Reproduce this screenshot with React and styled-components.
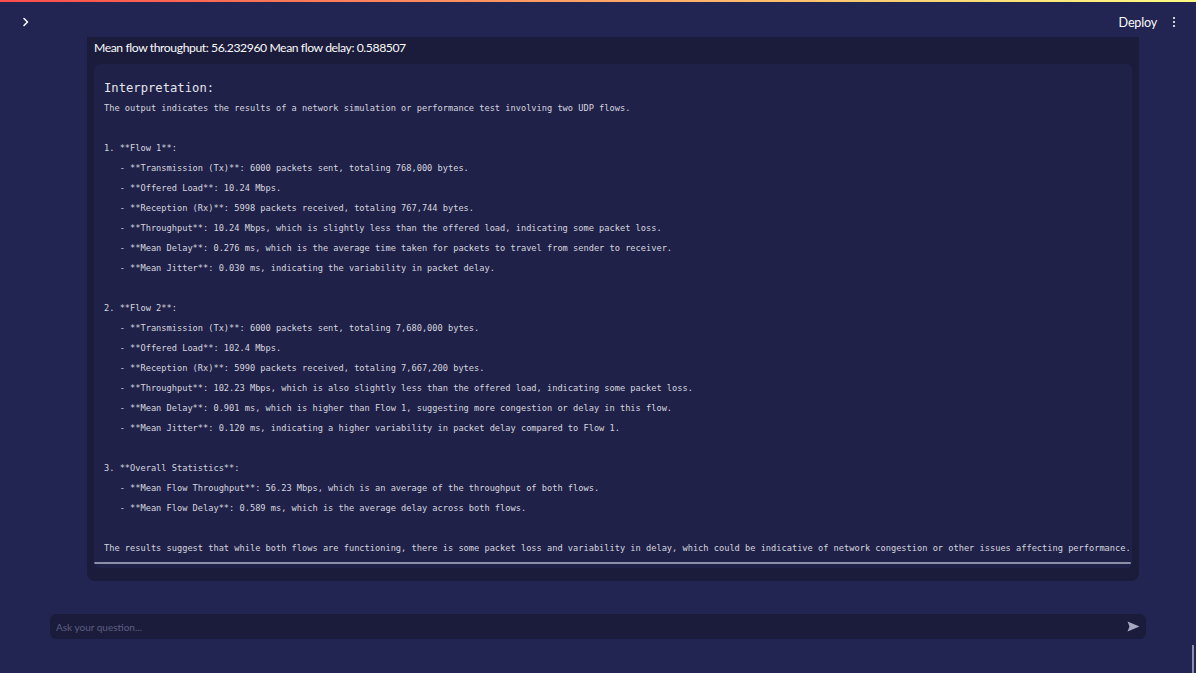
import React from "react";
import styled, { createGlobalStyle } from "styled-components";

const Global = createGlobalStyle`
  html, body { margin: 0; padding: 0; background: #222552; }
  body { font-family: "Lato", "Noto Sans", sans-serif; color: #fafafa; overflow: hidden; }
  * { box-sizing: border-box; }
`;

const Page = styled.div`
  width: 1196px;
  height: 673px;
  background: #222552;
  display: flex;
  flex-direction: column;
  position: relative;
`;

const Decoration = styled.div`
  height: 2px;
  background: linear-gradient(90deg, #ff4b4b, #fffd80);
`;

const Header = styled.header`
  height: 35px;
  display: flex;
  align-items: center;
  justify-content: space-between;
  padding: 5px 16px 0 20px;
`;

const IconButton = styled.button`
  background: none;
  border: none;
  padding: 0;
  color: #fafafa;
  display: flex;
  align-items: center;
  cursor: pointer;
`;

const HeaderRight = styled.div`
  display: flex;
  align-items: center;
  gap: 11px;
`;

const DeployButton = styled.button`
  background: none;
  border: none;
  color: #fafafa;
  font-family: "Lato", "Noto Sans", sans-serif;
  font-size: 12.6px;
  letter-spacing: -0.2px;
  padding: 0;
  margin-top: 1px;
`;

const Main = styled.main`
  padding: 0 57px 0 87px;
  display: flex;
  flex-direction: column;
`;

const ResultBox = styled.section`
  width: 1052px;
  background: #1b1c3c;
  border-radius: 0 0 8px 8px;
  padding: 2px 7px 13px 7px;
`;

const Summary = styled.p`
  margin: 0 0 8px 0;
  font-size: 12.2px;
  letter-spacing: -0.42px;
  line-height: 17px;
  color: #fafafa;
`;

const CodeBlock = styled.div`
  background: #1f2149;
  border-radius: 6px;
  overflow: hidden;
  display: flex;
  flex-direction: column;
`;

const CodeInner = styled.div`
  padding: 14px 0 4px 10px;
  white-space: pre;
  font-family: "DejaVu Sans Mono", "Liberation Mono", monospace;
  color: #d6d6de;
`;

const CodeTitle = styled.div`
  font-size: 12.2px;
  line-height: 20px;
  color: #e6e6ec;
`;

const CodeLine = styled.div`
  font-size: 8.66px;
  line-height: 20px;
  height: 20px;
`;

const ScrollTrack = styled.div`
  height: 6px;
  padding: 0 1px 4px 0;
`;

const ScrollThumb = styled.div`
  height: 2px;
  background: #8d8ea8;
  border-radius: 1px;
`;

const InputBar = styled.div`
  margin: 33px 50px 0 50px;
  height: 25px;
  background: #1b1c3c;
  border-radius: 6px;
  display: flex;
  align-items: center;
  padding: 0 6px 0 4px;
`;

const Input = styled.input`
  flex: 1;
  background: transparent;
  border: none;
  outline: none;
  padding: 0 2px;
  color: #fafafa;
  font-family: "Lato", "Noto Sans", sans-serif;
  font-size: 10px;
  &::placeholder { color: #5d5f80; }
`;

const SendButton = styled.button`
  background: none;
  border: none;
  padding: 0;
  display: flex;
  align-items: center;
`;

const PageScroll = styled.div`
  position: absolute;
  right: 2px;
  bottom: 0;
  width: 2px;
  height: 28px;
  background: #8d8ea8;
`;

const lines = [
  "The output indicates the results of a network simulation or performance test involving two UDP flows.",
  "",
  "1. **Flow 1**:",
  "   - **Transmission (Tx)**: 6000 packets sent, totaling 768,000 bytes.",
  "   - **Offered Load**: 10.24 Mbps.",
  "   - **Reception (Rx)**: 5998 packets received, totaling 767,744 bytes.",
  "   - **Throughput**: 10.24 Mbps, which is slightly less than the offered load, indicating some packet loss.",
  "   - **Mean Delay**: 0.276 ms, which is the average time taken for packets to travel from sender to receiver.",
  "   - **Mean Jitter**: 0.030 ms, indicating the variability in packet delay.",
  "",
  "2. **Flow 2**:",
  "   - **Transmission (Tx)**: 6000 packets sent, totaling 7,680,000 bytes.",
  "   - **Offered Load**: 102.4 Mbps.",
  "   - **Reception (Rx)**: 5990 packets received, totaling 7,667,200 bytes.",
  "   - **Throughput**: 102.23 Mbps, which is also slightly less than the offered load, indicating some packet loss.",
  "   - **Mean Delay**: 0.901 ms, which is higher than Flow 1, suggesting more congestion or delay in this flow.",
  "   - **Mean Jitter**: 0.120 ms, indicating a higher variability in packet delay compared to Flow 1.",
  "",
  "3. **Overall Statistics**:",
  "   - **Mean Flow Throughput**: 56.23 Mbps, which is an average of the throughput of both flows.",
  "   - **Mean Flow Delay**: 0.589 ms, which is the average delay across both flows.",
  "",
  "The results suggest that while both flows are functioning, there is some packet loss and variability in delay, which could be indicative of network congestion or other issues affecting performance.",
];

export default function App() {
  return (
    <Page>
      <Global />
      <Decoration />
      <Header>
        <IconButton aria-label="Expand sidebar">
          <svg width="12" height="12" viewBox="0 0 12 12">
            <path d="M4 2.5 L7.5 6 L4 9.5" stroke="#fafafa" strokeWidth="1.6" fill="none" strokeLinecap="round" strokeLinejoin="round" />
          </svg>
        </IconButton>
        <HeaderRight>
          <DeployButton>Deploy</DeployButton>
          <IconButton aria-label="Main menu">
            <svg width="12" height="12" viewBox="0 0 12 12">
              <circle cx="6" cy="2" r="1.1" fill="#fafafa" />
              <circle cx="6" cy="6" r="1.1" fill="#fafafa" />
              <circle cx="6" cy="10" r="1.1" fill="#fafafa" />
            </svg>
          </IconButton>
        </HeaderRight>
      </Header>
      <Main>
        <ResultBox>
          <Summary>Mean flow throughput: 56.232960 Mean flow delay: 0.588507</Summary>
          <CodeBlock>
            <CodeInner>
              <CodeTitle>Interpretation:</CodeTitle>
              {lines.map((l, i) => (
                <CodeLine key={i}>{l}</CodeLine>
              ))}
            </CodeInner>
            <ScrollTrack>
              <ScrollThumb />
            </ScrollTrack>
          </CodeBlock>
        </ResultBox>
      </Main>
      <InputBar>
        <Input placeholder="Ask your question..." />
        <SendButton aria-label="Send">
          <svg width="13" height="11" viewBox="0 0 13 11">
            <path d="M0.5 0.5 L12.5 5.5 L0.5 10.5 L2.5 5.5 Z" fill="#a6a7c0" />
          </svg>
        </SendButton>
      </InputBar>
      <PageScroll />
    </Page>
  );
}
